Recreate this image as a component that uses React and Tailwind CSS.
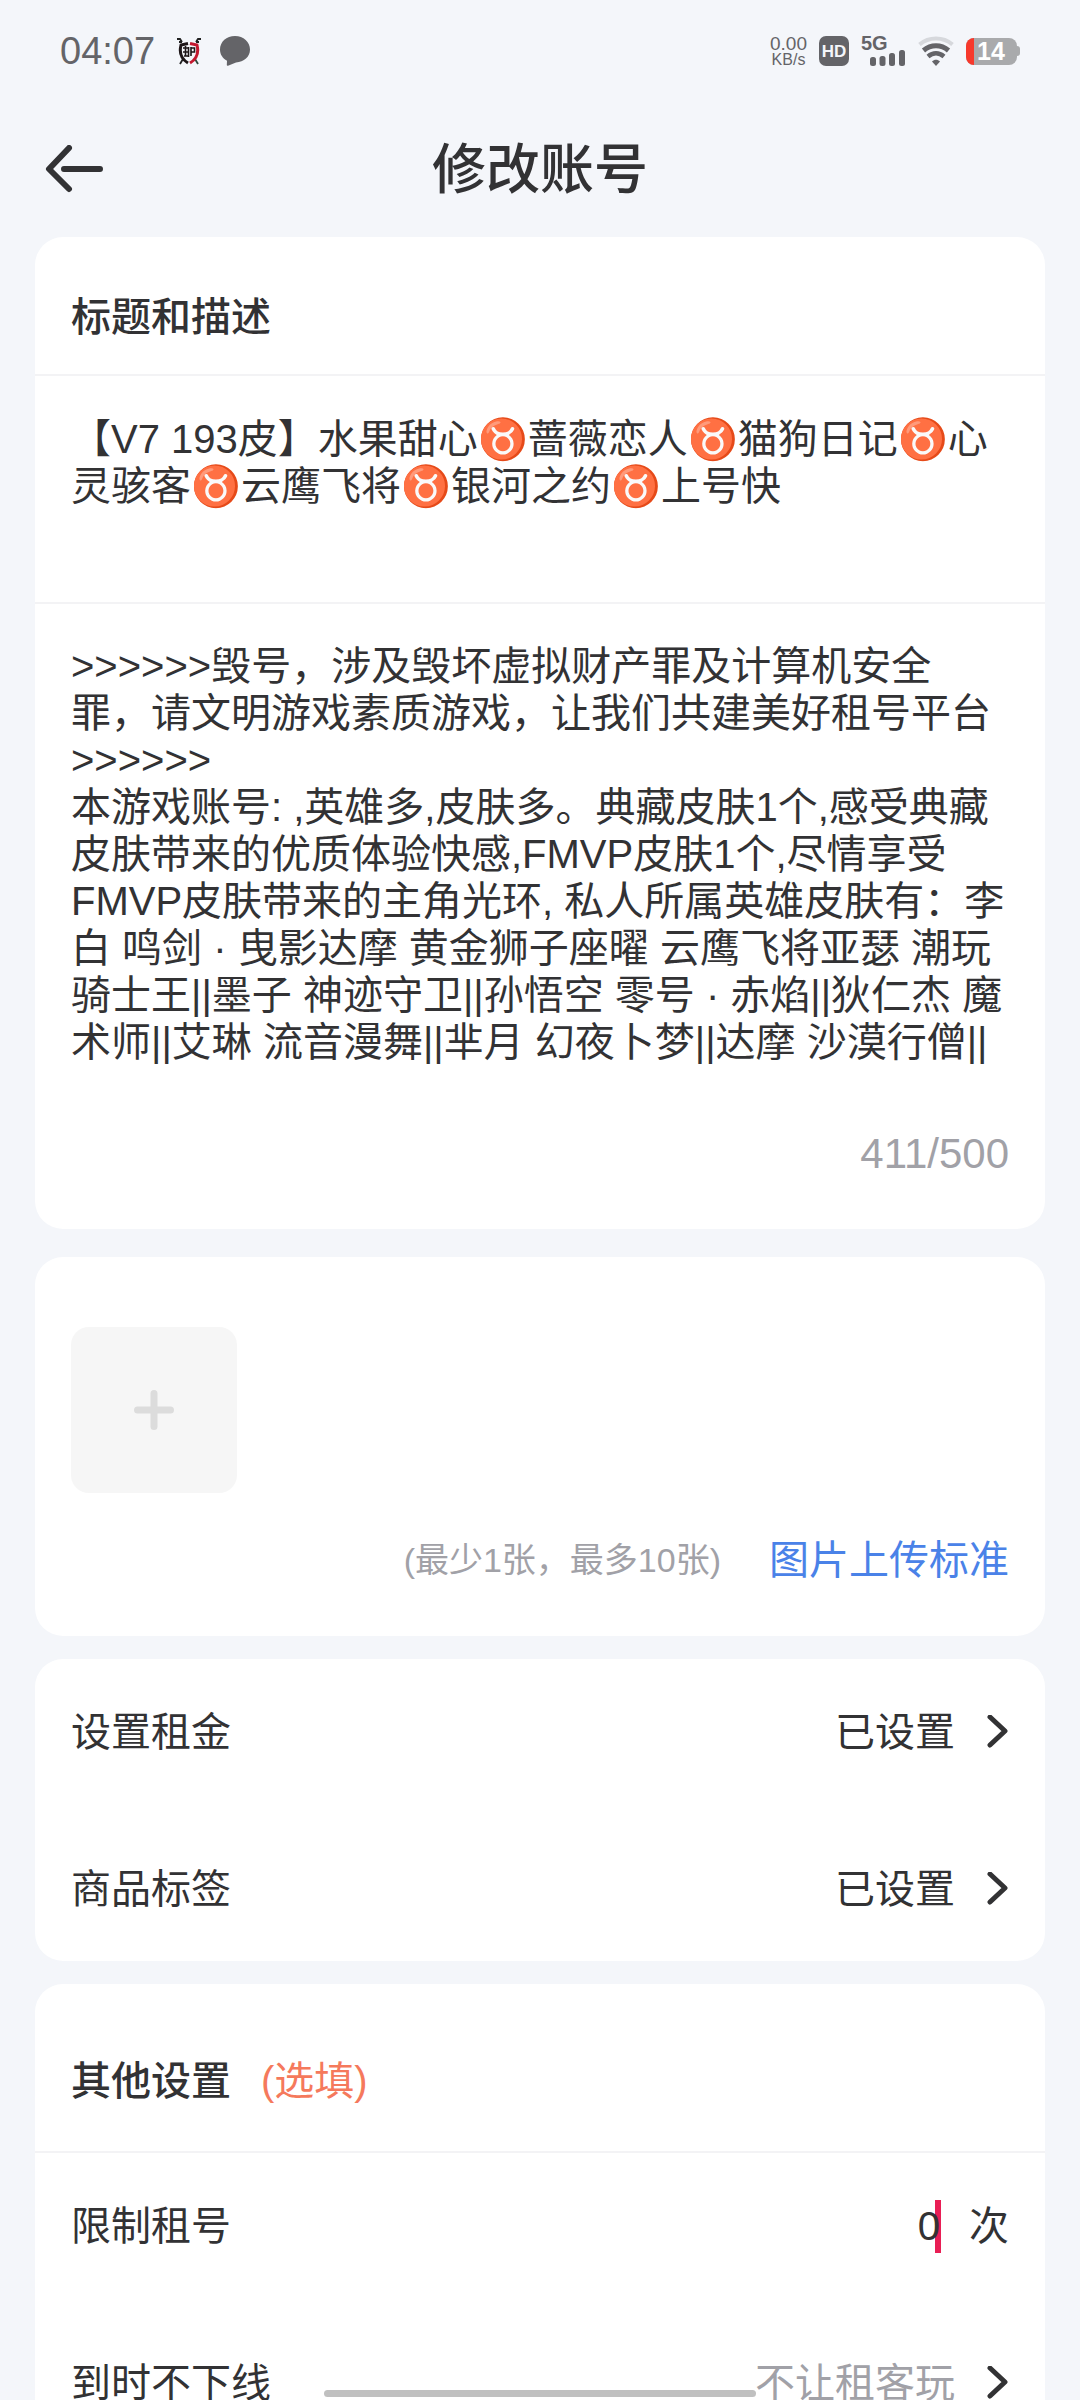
import React, { useState } from "react";

const DESCRIPTION = `>>>>>>毁号，涉及毁坏虚拟财产罪及计算机安全罪，请文明游戏素质游戏，让我们共建美好租号平台>>>>>>
本游戏账号: ,英雄多,皮肤多。典藏皮肤1个,感受典藏皮肤带来的优质体验快感,FMVP皮肤1个,尽情享受FMVP皮肤带来的主角光环, 私人所属英雄皮肤有：李白 鸣剑 · 曳影达摩 黄金狮子座曜 云鹰飞将亚瑟 潮玩骑士王||墨子 神迹守卫||孙悟空 零号 · 赤焰||狄仁杰 魔术师||艾琳 流音漫舞||芈月 幻夜卜梦||达摩 沙漠行僧||`;

const TITLE =
  "【V7 193皮】水果甜心♉蔷薇恋人♉猫狗日记♉心灵骇客♉云鹰飞将♉银河之约♉上号快";

const StatusBar = () => {
  return (
    <div className="flex items-center justify-between h-[102px] px-[60px] text-[#646468]">
      {/* Time, Notifications */}
      <div className="flex items-center">
        <span className="text-[38px] leading-none">04:07</span>
        <svg className="ml-[22px] w-6 h-7" viewBox="0 0 24 28" fill="none">
          <path d="M0 2h3l2 3M24 2h-3l-2 3M2 5h3M22 5h-3M6 22l-3 5" stroke="#222" strokeWidth="1.8" />
          <path d="M18 22l3 5" stroke="#2c4a3c" strokeWidth="1.8" />
          <path d="M11 6.500L4 8c-1.500 6-1.500 13 7 18" stroke="#1d1517" strokeWidth="3" />
          <path d="M13 6.500L20 8c1.500 6 1.500 13-7 18" stroke="#c3182f" strokeWidth="3" />
          <path d="M6 11h6M8.500 9v10M6 15h5M11.500 10v10M14 11h3.500v4H14M14 10v9M7 19h4" stroke="#1d1517" strokeWidth="1.600" />
        </svg>
        <svg className="ml-[19px] w-[30px] h-[30px]" viewBox="0 0 30 30" fill="currentColor">
          <path d="M15 0C6.500 0 0 5.800 0 13.500c0 5 2.700 8.900 7 11.200L6.800 29c0 .7.600 1 1.200.7l8-3.200c8-.5 14-5.700 14-13S23.500 0 15 0z" />
        </svg>
      </div>

      {/* Network, Battery */}
      <div className="flex items-center">
        <div className="flex flex-col items-center">
          <span className="text-[19px] leading-[17px]">0.00</span>
          <span className="text-[16px] leading-[15px]">KB/s</span>
        </div>
        <span className="ml-3 flex items-center justify-center w-[30px] h-[30px] rounded-[7px] bg-[#646468] text-[#f4f6fa] text-[17px] leading-none font-bold">
          HD
        </span>
        <div className="ml-3 flex flex-col w-[44px] h-[30px]">
          <span className="text-[20px] leading-[15px] font-bold">5G</span>
          <svg className="self-end w-[35px] h-4 -mt-px" viewBox="0 0 35 16" fill="currentColor">
            <rect x="0" y="7" width="6" height="9" rx="2.500" />
            <rect x="9.500" y="6" width="6" height="10" rx="2.500" />
            <rect x="19" y="3" width="6" height="13" rx="2.500" />
            <rect x="29" y="0" width="6" height="16" rx="2.500" />
          </svg>
        </div>
        <svg className="ml-[13px] w-9 h-[30px]" viewBox="0 0 36 30" fill="none" stroke="currentColor">
          <path d="M1.500 8.500C11 .5 25 .5 34.500 8.500" stroke="#d6d8dc" strokeWidth="4" />
          <path d="M5.500 14.500c7.500-6.300 17.500-6.300 25 0" strokeWidth="5" />
          <path d="M10 20.500c5-4.300 11-4.300 16 0" strokeWidth="4.500" />
          <path d="M14 25.500c2.500-2.200 5.500-2.200 8 0L18 30z" fill="currentColor" stroke="none" />
        </svg>
        <div className="ml-3 flex items-center">
          <div className="flex items-stretch w-[51px] h-[27px] rounded-lg bg-[#a9aaac] overflow-hidden">
            <span className="w-2 bg-[#f7392c]" />
            <span className="pl-[3px] text-white text-[25px] leading-[27px] font-bold">14</span>
          </div>
          <div className="w-[3px] h-[10px] rounded-r-sm bg-[#a9aaac]" />
        </div>
      </div>
    </div>
  );
};

const Chevron = () => {
  return (
    <svg className="w-[22px] h-9" viewBox="0 0 22 36" fill="none" stroke="#323234" strokeWidth="5" strokeLinecap="round" strokeLinejoin="round">
      <path d="M3 2l15 14L3 30" />
    </svg>
  );
};

const SettingRow = ({ label, value, muted }) => {
  return (
    <button type="button" className="flex items-center justify-between w-full cursor-pointer">
      <span>{label}</span>
      <span className="flex items-center gap-8">
        <span className={muted ? "text-[#a1a1a7]" : ""}>{value}</span>
        <Chevron />
      </span>
    </button>
  );
};

const App = () => {
  //States
  const [title, setTitle] = useState(TITLE);
  const [description, setDescription] = useState(DESCRIPTION);
  const [times, setTimes] = useState("0");

  return (
    <div
      lang="zh-CN"
      className="h-screen overflow-hidden bg-[#f4f6fa] text-[#323234] text-[40px] leading-[47px] font-['Liberation_Sans','Noto_Sans_CJK_SC',sans-serif]"
    >
      <StatusBar />

      {/* Back Button, Page Title */}
      <header className="grid grid-cols-[60px_1fr_60px] items-center h-[135px] px-[44px]">
        <button type="button" aria-label="返回" className="cursor-pointer">
          <svg className="w-[60px] h-[50px]" viewBox="0 0 60 50" fill="none" stroke="#323234" strokeWidth="6" strokeLinecap="round" strokeLinejoin="round">
            <path d="M25 3L5 24l20 20M20 24h36" />
          </svg>
        </button>
        <h1 className="text-center text-[54px] leading-[58px] font-medium">修改账号</h1>
      </header>

      <main className="flex flex-col gap-[23px] px-[35px]">
        {/* Title, Description */}
        <section className="rounded-[28px] bg-white mb-[5px]">
          <h2 className="px-9 pt-[57px] pb-[33px] font-medium">标题和描述</h2>
          <div className="px-9 pt-10 pb-[45px] border-t-2 border-[#f3f3f5]">
            <textarea
              aria-label="标题"
              rows={3}
              className="block w-full resize-none overflow-hidden outline-none"
              value={title}
              onChange={(e) => setTitle(e.target.value)}
            />
          </div>
          <div className="px-9 pt-[39px] pb-[52px] border-t-2 border-[#f3f3f5]">
            <textarea
              aria-label="描述"
              rows={9}
              className="block w-full resize-none overflow-hidden outline-none"
              value={description}
              onChange={(e) => setDescription(e.target.value)}
            />
            <p className="mt-16 text-right text-[42px] text-[#a1a1a7]">411/500</p>
          </div>
        </section>

        {/* Image Upload */}
        <section className="rounded-[28px] bg-white px-9 pt-[70px] pb-[52px]">
          <button
            type="button"
            aria-label="上传图片"
            className="flex items-center justify-center w-[166px] h-[166px] rounded-[18px] bg-[#f6f6f6] cursor-pointer"
          >
            <svg className="w-10 h-10" viewBox="0 0 40 40" stroke="#dcdcdc" strokeWidth="7" strokeLinecap="round">
              <path d="M20 3.500v33M3.500 20h33" />
            </svg>
          </button>
          <div className="mt-11 flex items-center justify-end gap-12">
            <span className="text-[34px] text-[#a1a1a7]">(最少1张，最多10张)</span>
            <a href="#standard" className="text-[#4a82e8]">
              图片上传标准
            </a>
          </div>
        </section>

        {/* Rent, Tags */}
        <section className="flex flex-col gap-[110px] rounded-[28px] bg-white px-9 pt-[50px] pb-12">
          <SettingRow label="设置租金" value="已设置" />
          <SettingRow label="商品标签" value="已设置" />
        </section>

        {/* Other Settings */}
        <section className="rounded-[28px] bg-white">
          <h2 className="flex gap-[30px] px-9 pt-[74px] pb-[46px] font-medium">
            其他设置
            <span className="font-normal text-[#f5795c]">(选填)</span>
          </h2>
          <div className="flex flex-col gap-[110px] px-9 pt-[50px] pb-[47px] border-t-2 border-[#f3f3f5]">
            <div className="flex items-center justify-between">
              <label htmlFor="times">限制租号</label>
              <div className="flex items-center">
                <input
                  id="times"
                  type="text"
                  inputMode="numeric"
                  className="relative z-10 w-[200px] h-[47px] text-right outline-none"
                  value={times}
                  onChange={(e) => setTimes(e.target.value)}
                />
                <span className="-ml-[5px] w-[6px] h-[53px] -my-[3px] bg-[#e91e55]" />
                <span className="ml-[28px]">次</span>
              </div>
            </div>
            <SettingRow label="到时不下线" value="不让租客玩" muted />
          </div>
        </section>
      </main>

      {/* Home Indicator */}
      <div className="fixed bottom-[3px] left-1/2 -translate-x-1/2 w-2/5 h-[7px] rounded-full bg-[#c0c0c0]" />
    </div>
  );
};

export default App;
